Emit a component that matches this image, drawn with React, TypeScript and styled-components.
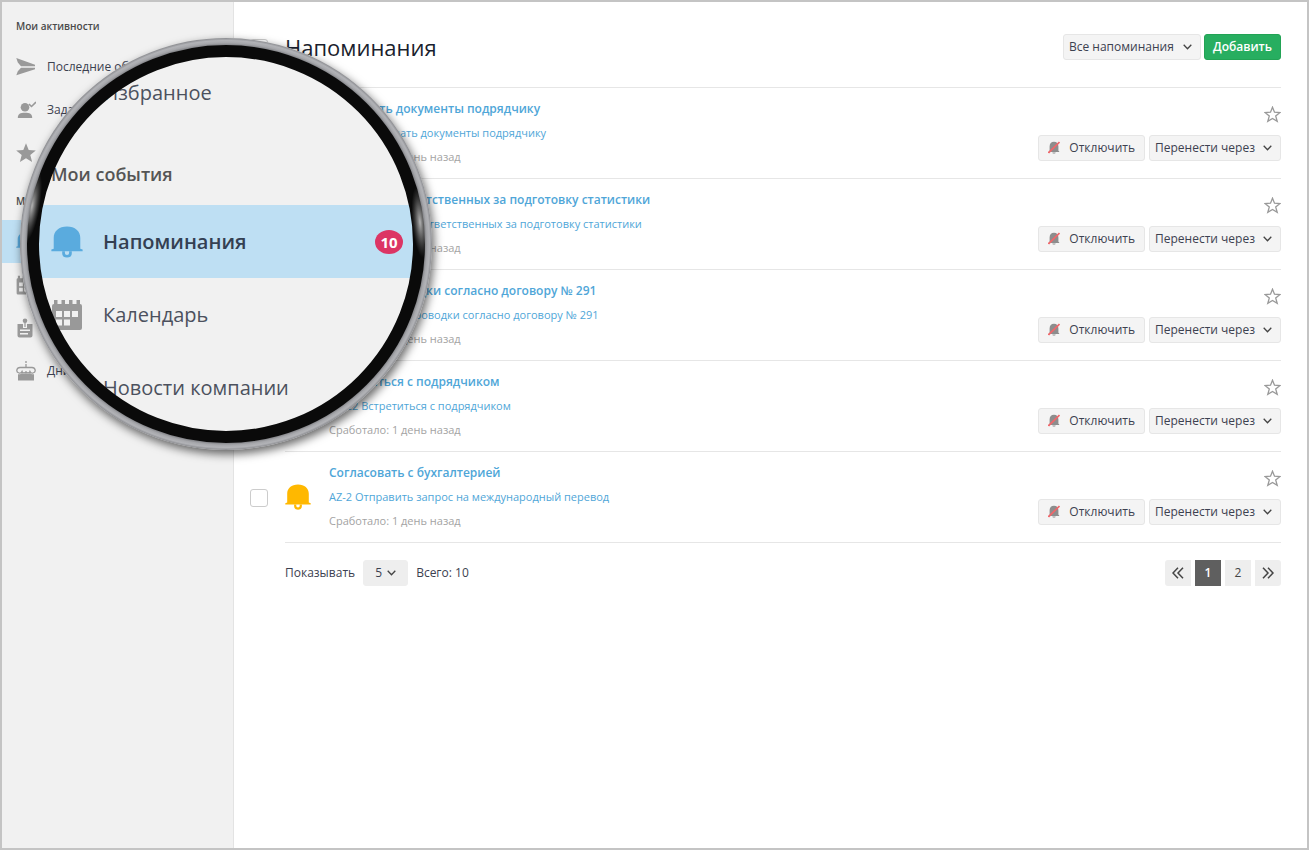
import React from "react";
import styled, { createGlobalStyle, css } from "styled-components";

const Global = createGlobalStyle`
  *, *::before, *::after { box-sizing: border-box; }
  body { margin: 0; background: #fff; color: #3c4150; font: 12px/20px "Open Sans", "Noto Sans", sans-serif; }
  button, select, input { font: inherit; color: inherit; margin: 0; }
  h1, h2, p, ul { margin: 0; padding: 0; }
  a { color: inherit; text-decoration: none; }
`;

const Frame = styled.div`
  position: relative;
  display: flex;
  min-height: 100vh;
  border: 2px solid #c4c4c4;
  overflow: hidden;
`;

const Sidebar = styled.nav`
  flex: 0 0 232px;
  padding-top: 5px;
  background: #f1f1f1;
  border-right: 1px solid #e3e3e3;
  display: flex;
  flex-direction: column;
  gap: 8px;
`;

const GroupTitle = styled.h2`
  height: 38px;
  padding-left: 14px;
  font-size: 10px;
  line-height: 38px;
  font-weight: 600;
  color: #4a4a4a;
`;

const NavList = styled.ul`
  list-style: none;
`;

const NavLink = styled.a<{ $active?: boolean }>`
  display: flex;
  align-items: center;
  height: 43px;
  padding-left: 14px;
  gap: 11px;
  color: #3c4150;
  ${(p) => p.$active && css`background: #bedff3; font-weight: 600;`}
  svg { flex: none; color: ${(p) => (p.$active ? "#5aabde" : "#999")}; }
`;

const Main = styled.main`
  flex: 1;
  min-width: 0;
  padding: 5px 26px 40px 16px;
`;

const Line = styled.div`
  display: grid;
  grid-template-columns: 35px minmax(0, 1fr);
  align-items: center;
`;

const Check = styled.input`
  appearance: none;
  width: 18px;
  height: 18px;
  border: 1px solid #ccc;
  border-radius: 3px;
  background: #fff;
`;

const Header = styled.header`
  display: flex;
  align-items: center;
  gap: 3px;
  height: 81px;
  border-bottom: 1px solid #e6e6e6;
`;

const PageTitle = styled.h1`
  flex: 1;
  font-size: 22px;
  line-height: 30px;
  font-weight: 400;
  color: #1b1f2e;
`;

const Button = styled.button<{ $primary?: boolean }>`
  display: inline-flex;
  align-items: center;
  gap: 9px;
  height: 26px;
  padding: 0 9px;
  border: 1px solid #e6e6e6;
  border-radius: 3px;
  background: #f4f4f4;
  white-space: nowrap;
  ${(p) => p.$primary && css`
    padding: 0 8px;
    border-color: #22a355;
    background: #27ae60;
    color: #fff;
    font-weight: 600;
  `}
`;

const Picker = styled.div<{ $width: number; $plain?: boolean }>`
  position: relative;
  display: inline-flex;
  width: ${(p) => p.$width}px;
  height: 26px;
  select {
    appearance: none;
    width: 100%;
    padding: 0 0 0 ${(p) => (p.$plain ? 11 : 5)}px;
    border: 1px solid ${(p) => (p.$plain ? "#eee" : "#e6e6e6")};
    border-radius: 3px;
    background: ${(p) => (p.$plain ? "#eee" : "#f4f4f4")};
  }
  svg {
    position: absolute;
    right: ${(p) => (p.$plain ? 12 : 9)}px;
    top: 9px;
    pointer-events: none;
  }
`;

const Row = styled.article`
  display: flex;
  align-items: center;
  height: 91px;
  border-bottom: 1px solid #e6e6e6;
`;

const BellCell = styled.div`
  flex: 0 0 44px;
  display: flex;
`;

const Texts = styled.div`
  flex: 1;
  min-width: 0;
  line-height: 24px;
`;

const RowTitle = styled.a`
  display: block;
  font-weight: 600;
  color: #4fa6d8;
`;

const TaskLink = styled.a`
  display: block;
  font-size: 11px;
  color: #4fa6d8;
`;

const Fired = styled.p`
  font-size: 11px;
  color: #a3a3a3;
`;

const Side = styled.div`
  display: flex;
  flex-direction: column;
  align-items: flex-end;
  gap: 12px;
`;

const Actions = styled.div`
  display: flex;
  gap: 4px;
`;

const StarButton = styled.button`
  display: flex;
  padding: 0;
  border: 0;
  background: none;
  color: #999;
`;

const Footer = styled.footer`
  display: flex;
  align-items: center;
  gap: 8px;
  padding: 17px 0 0 35px;
`;

const Pages = styled.div`
  display: flex;
  gap: 4px;
  margin-left: auto;
`;

const PageButton = styled.button<{ $current?: boolean }>`
  display: flex;
  align-items: center;
  justify-content: center;
  width: 26px;
  height: 26px;
  padding: 0;
  border: 0;
  background: ${(p) => (p.$current ? "#5f5f5f" : "#eee")};
  color: ${(p) => (p.$current ? "#fff" : "#444")};
  font-weight: ${(p) => (p.$current ? 600 : 400)};
  &:first-child { border-radius: 3px 0 0 3px; }
  &:last-child { border-radius: 0 3px 3px 0; }
`;

const Magnifier = styled.div`
  position: absolute;
  left: 18px;
  top: 36px;
  width: 412px;
  height: 412px;
  padding: 18px;
  border-radius: 50%;
  background: #f1f1f1;
  box-shadow: 2px 4px 10px rgba(0, 0, 0, 0.6);
`;

const Glass = styled.div`
  height: 100%;
  border-radius: 50%;
  overflow: hidden;
`;

const Ring = styled.svg`
  position: absolute;
  inset: 0;
`;

const BigTitle = styled.p`
  height: 76px;
  padding: 0 0 0 13px;
  font-size: 18px;
  line-height: 90px;
  font-weight: 600;
  color: #555;
`;

const BigItem = styled.div<{ $active?: boolean }>`
  display: flex;
  align-items: center;
  gap: 20px;
  height: 73px;
  padding: 0 11px 0 13px;
  font-size: 20px;
  color: #4c515e;
  ${(p) => p.$active && css`background: #bedff3; font-weight: 600; color: #344052;`}
  svg { flex: none; color: ${(p) => (p.$active ? "#5aabde" : "#999")}; }
`;

const Badge = styled.span`
  margin-left: auto;
  width: 28px;
  height: 24px;
  border-radius: 50%;
  background: #dc3564;
  color: #fff;
  font-size: 15px;
  line-height: 24px;
  font-weight: 700;
  text-align: center;
`;

const Chevron = () => (
  <svg width="9" height="8" viewBox="0 0 9 8" fill="none" stroke="#444" strokeWidth="1.3">
    <path d="M0.7 1.8 4.5 5.8 8.3 1.8" />
  </svg>
);

const Bell = ({ size, color = "currentColor" }: { size: number; color?: string }) => (
  <svg width={size} height={size} viewBox="0 0 26 28" preserveAspectRatio="none">
    <path fill={color} d="M0.300 22v-1.400l1.900-.8V10.500C2.200 4.500 6.500.5 13 .5s10.800 4 10.800 10v9.300l1.900.8V22z" />
    <path fill="none" stroke={color} strokeWidth="2.2" d="M10.2 22v1.8c0 3.6 5.6 3.6 5.6 0V22" />
  </svg>
);

const MutedBell = () => (
  <svg width="12" height="13" viewBox="0 0 12 13">
    <path fill="#8d8d8d" d="M.8 11v-.8l.8-.5V5.500C1.600 2.500 3.200.8 6 .8s4.400 1.700 4.400 4.700v4.200l.8.5v.8zM4.300 11.400h3.400c-.4 1.600-3 1.600-3.400 0z" />
    <path stroke="#f0666a" strokeWidth="1.7" d="M.5 11.800 11.500 1" />
  </svg>
);

const Calendar = ({ size }: { size: number }) => (
  <svg width={size} height={size} viewBox="0 0 32 32">
    <path
      fill="currentColor"
      fillRule="evenodd"
      d="M1 7q0-2 2-2V1h3.500v4h4V1H14v4h4V1h3.500v4h4V1H29v4q2 0 2 2v22q0 2-2 2H3q-2 0-2-2zM5 12v6h6v-6zM13 12v6h6v-6zM21 12v6h6v-6zM5 20.500v6h6v-6zM13 20.500v6h6v-6z"
    />
  </svg>
);

const Plane = () => (
  <svg width="20" height="20" viewBox="0 0 20 20" fill="currentColor">
    <path d="M.3 1 19 7.700V9.200H5L1.800 5.500zM5 10.700H19v1.500L.3 18.200 1.800 14.200z" />
  </svg>
);

const UserCheck = () => (
  <svg width="20" height="18" viewBox="0 0 20 18">
    <circle cx="9" cy="6.300" r="4.300" fill="currentColor" />
    <path fill="currentColor" d="M1.800 17c0-4 2.500-5.200 7.200-5.200s7.200 1.200 7.200 5.200z" />
    <path fill="none" stroke="currentColor" strokeWidth="1.600" d="M13 3.200 15.500 5.500 20 1" />
  </svg>
);

const StarSolid = () => (
  <svg width="20" height="20" viewBox="0 0 20 20" fill="currentColor">
    <path d="M10 .3 12.700 6.900 19.800 7.400 14.300 12 16.100 19 10 15.200 3.900 19 5.700 12 .2 7.400 7.300 6.900z" />
  </svg>
);

const StarOutline = () => (
  <svg width="17" height="17" viewBox="0 0 17 17" fill="none" stroke="currentColor" strokeWidth="1.300">
    <path d="M8.500 1.200 10.500 6.200 16 6.500 11.700 10 13.200 15.400 8.500 12.400 3.800 15.400 5.300 10 1 6.500 6.500 6.200z" />
  </svg>
);

const News = () => (
  <svg width="20" height="20" viewBox="0 0 20 20">
    <path
      fill="currentColor"
      fillRule="evenodd"
      d="M1.500 6H7v4h4V6h5.500v11.500q0 2-2 2h-11q-2 0-2-2zM4 11.500V13h10v-1.500zM4 15v1.500h8V15z"
    />
    <circle cx="9" cy="2.800" r="2.300" fill="currentColor" />
    <path stroke="currentColor" strokeWidth="1.200" d="M9 4v5" />
  </svg>
);

const Cake = () => (
  <svg width="20" height="20" viewBox="0 0 20 20">
    <path fill="none" stroke="currentColor" strokeWidth="1.300" d="M10 0v2M10 3v3M3 12C-.5 11 .5 6.500 4 6.500h12c3.500 0 4.500 4.500 1 5.500-1.500.5-2.500-.5-3-1.500-.5 2-3.500 2-4 0-.5 2-3.500 2-4 0-.5 1-1.500 2-3 1.500z" />
    <path fill="currentColor" d="M2 13.200c2 .3 3-.3 4-1.200 1.300 1.300 2.700 1.300 4 0 1.300 1.300 2.700 1.300 4 0 1 .9 2 1.500 4 1.200v6.300H2z" />
  </svg>
);

const Double = ({ flip }: { flip?: boolean }) => (
  <svg width="12" height="12" viewBox="0 0 12 12" fill="none" stroke="currentColor" strokeWidth="1.500">
    <path d={flip ? "M1 .8 6 6 1 11.200M6 .8 11 6 6 11.200" : "M6 .8 1 6 6 11.200M11 .8 6 6 11 11.200"} />
  </svg>
);

const groups = [
  {
    title: "Мои активности",
    items: [
      { label: "Последние обновления", icon: <Plane /> },
      { label: "Задачи", icon: <UserCheck /> },
      { label: "Избранное", icon: <StarSolid /> },
    ],
  },
  {
    title: "Мои события",
    items: [
      { label: "Напоминания", icon: <Bell size={20} />, active: true },
      { label: "Календарь", icon: <Calendar size={20} /> },
      { label: "Новости компании", icon: <News /> },
      { label: "Дни рождения", icon: <Cake /> },
    ],
  },
];

const reminders = [
  { title: "Переслать документы подрядчику", task: "AZ-25 Переслать документы подрядчику" },
  { title: "Назначить ответственных за подготовку статистики", task: "AZ-24 Назначить ответственных за подготовку статистики" },
  { title: "Сделать проводки согласно договору № 291", task: "AZ-23 Сделать проводки согласно договору № 291" },
  { title: "Встретиться с подрядчиком", task: "AZ-22 Встретиться с подрядчиком" },
  { title: "Согласовать с бухгалтерией", task: "AZ-2 Отправить запрос на международный перевод" },
];

export default function App() {
  return (
    <Frame>
      <Global />
      <Sidebar>
        {groups.map((g) => (
          <section key={g.title}>
            <GroupTitle>{g.title}</GroupTitle>
            <NavList>
              {g.items.map((i) => (
                <li key={i.label}>
                  <NavLink href="#" $active={"active" in i}>{i.icon}{i.label}</NavLink>
                </li>
              ))}
            </NavList>
          </section>
        ))}
      </Sidebar>

      <Main>
        <Line>
          <Check type="checkbox" aria-label="Выбрать все" />
          <Header>
            <PageTitle>Напоминания</PageTitle>
            <Picker $width={138}>
              <select aria-label="Фильтр"><option>Все напоминания</option></select>
              <Chevron />
            </Picker>
            <Button $primary>Добавить</Button>
          </Header>
        </Line>

        {reminders.map((r) => (
          <Line key={r.title}>
            <Check type="checkbox" aria-label={r.title} />
            <Row>
              <BellCell><Bell size={26} color="#ffb800" /></BellCell>
              <Texts>
                <RowTitle href="#">{r.title}</RowTitle>
                <TaskLink href="#">{r.task}</TaskLink>
                <Fired>Сработало: 1 день назад</Fired>
              </Texts>
              <Side>
                <StarButton aria-label="В избранное"><StarOutline /></StarButton>
                <Actions>
                  <Button><MutedBell />Отключить</Button>
                  <Picker $width={132}>
                    <select aria-label="Перенести"><option>Перенести через</option></select>
                    <Chevron />
                  </Picker>
                </Actions>
              </Side>
            </Row>
          </Line>
        ))}

        <Footer>
          <label htmlFor="size">Показывать</label>
          <Picker $width={45} $plain>
            <select id="size"><option>5</option></select>
            <Chevron />
          </Picker>
          <span>Всего: 10</span>
          <Pages>
            <PageButton aria-label="Назад"><Double /></PageButton>
            <PageButton $current>1</PageButton>
            <PageButton>2</PageButton>
            <PageButton aria-label="Вперёд"><Double flip /></PageButton>
          </Pages>
        </Footer>
      </Main>

      <Magnifier>
        <Glass>
          <BigItem><svg width="32" height="32" />Избранное</BigItem>
          <BigTitle>Мои события</BigTitle>
          <BigItem $active><Bell size={32} />Напоминания<Badge>10</Badge></BigItem>
          <BigItem><Calendar size={32} />Календарь</BigItem>
          <BigItem><svg width="32" height="32" />Новости компании</BigItem>
        </Glass>
        <Ring viewBox="0 0 412 412">
          <defs>
            <radialGradient id="rim" gradientUnits="userSpaceOnUse" cx="206" cy="206" r="206">
              <stop offset="0.967" stopColor="#88898d" />
              <stop offset="0.976" stopColor="#a6a7ab" />
              <stop offset="0.988" stopColor="#b2b3b7" />
              <stop offset="1" stopColor="#8a8b8f" />
            </radialGradient>
            <radialGradient id="gloss">
              <stop offset="0" stopColor="#b4b4b4" />
              <stop offset="0.4" stopColor="#777" stopOpacity="0.8" />
              <stop offset="1" stopColor="#555" stopOpacity="0" />
            </radialGradient>
          </defs>
          <circle cx="206" cy="206" r="193.500" fill="none" stroke="#0a0a0a" strokeWidth="13" />
          <ellipse cx="12" cy="168" rx="8" ry="36" fill="url(#gloss)" transform="rotate(10 12 168)" />
          <ellipse cx="400" cy="184" rx="8" ry="36" fill="url(#gloss)" transform="rotate(-5 400 184)" />
          <circle cx="206" cy="206" r="202.500" fill="none" stroke="url(#rim)" strokeWidth="7" />
        </Ring>
      </Magnifier>
    </Frame>
  );
}
